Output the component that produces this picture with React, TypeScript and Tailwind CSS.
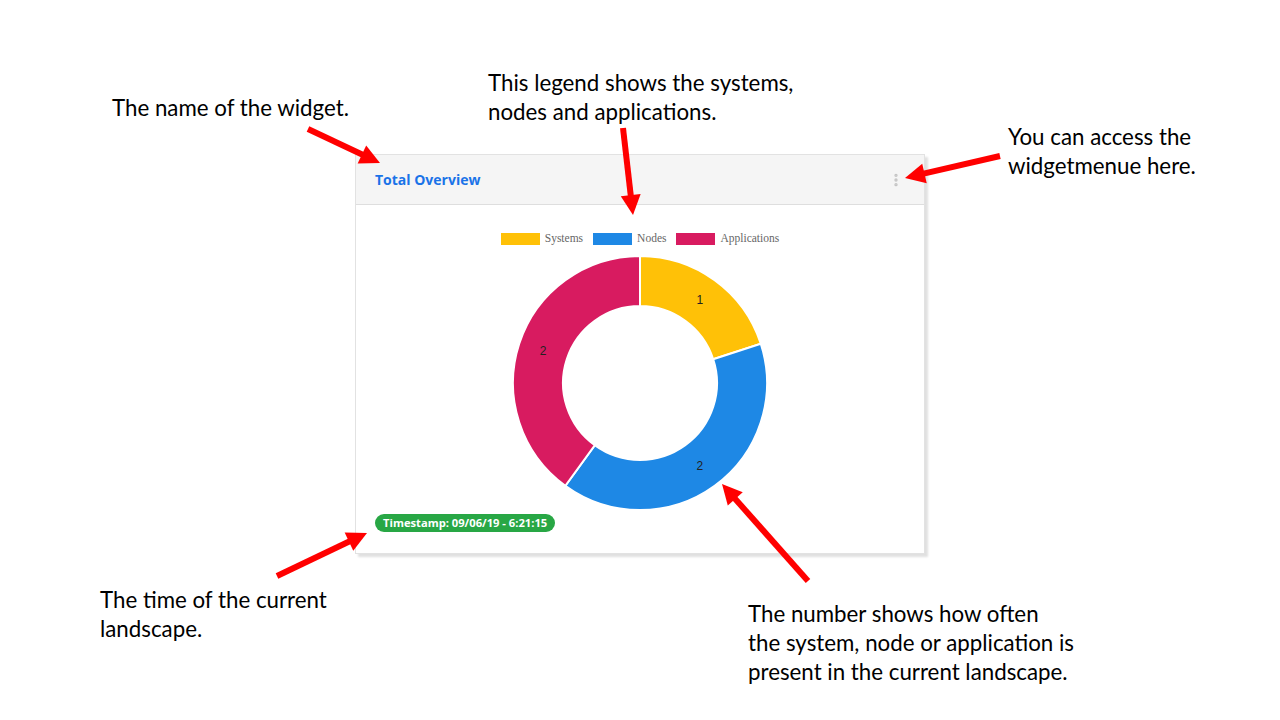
import { MoreVertical } from 'lucide-react'

interface Slice {
  label: string
  value: number
  color: string
}

const slices: Slice[] = [
  { label: 'Systems', value: 1, color: '#ffc107' },
  { label: 'Nodes', value: 2, color: '#1e88e5' },
  { label: 'Applications', value: 2, color: '#d81b60' },
]

// point on circle, angle measured clockwise from 12 o'clock
const pt = (cx: number, cy: number, r: number, a: number) => [
  cx + r * Math.sin(a),
  cy - r * Math.cos(a),
]

function arcPath(cx: number, cy: number, ro: number, ri: number, a0: number, a1: number) {
  const large = a1 - a0 > Math.PI ? 1 : 0
  const [x0, y0] = pt(cx, cy, ro, a0)
  const [x1, y1] = pt(cx, cy, ro, a1)
  const [x2, y2] = pt(cx, cy, ri, a1)
  const [x3, y3] = pt(cx, cy, ri, a0)
  return `M${x0} ${y0} A${ro} ${ro} 0 ${large} 1 ${x1} ${y1} L${x2} ${y2} A${ri} ${ri} 0 ${large} 0 ${x3} ${y3} Z`
}

function Donut() {
  const cx = 130
  const cy = 130
  const ro = 127
  const ri = 77
  const total = slices.reduce((s, x) => s + x.value, 0)
  let a = 0
  return (
    <svg width={260} height={260} viewBox="0 0 260 260">
      {slices.map((s) => {
        const a0 = a
        const a1 = a + (s.value / total) * Math.PI * 2
        a = a1
        const mid = (a0 + a1) / 2
        const [lx, ly] = pt(cx, cy, (ro + ri) / 2, mid)
        return (
          <g key={s.label}>
            <path d={arcPath(cx, cy, ro, ri, a0, a1)} fill={s.color} stroke="#fff" strokeWidth={2} />
            <text
              x={lx}
              y={ly}
              textAnchor="middle"
              dominantBaseline="central"
              fontSize={12}
              fill="#222"
              fontFamily="'Liberation Sans', Arial, sans-serif"
            >
              {s.value}
            </text>
          </g>
        )
      })}
    </svg>
  )
}

function Arrow({ x1, y1, x2, y2 }: { x1: number; y1: number; x2: number; y2: number }) {
  const dx = x2 - x1
  const dy = y2 - y1
  const len = Math.hypot(dx, dy)
  const ux = dx / len
  const uy = dy / len
  const head = 20
  const half = 10
  const bx = x2 - ux * head
  const by = y2 - uy * head
  return (
    <g>
      <line x1={x1} y1={y1} x2={bx + ux * 2} y2={by + uy * 2} stroke="#ff0000" strokeWidth={6} />
      <polygon
        points={`${x2},${y2} ${bx - uy * half},${by + ux * half} ${bx + uy * half},${by - ux * half}`}
        fill="#ff0000"
      />
    </g>
  )
}

export default function App() {
  return (
    <div
      className="relative w-[1280px] h-[720px] bg-white overflow-hidden text-black"
      style={{ fontFamily: "Lato, 'Open Sans', sans-serif" }}
    >
      {/* Widget card */}
      <div className="ml-[355px] mt-[154px] w-[570px] h-[400px] bg-white border border-[#e2e2e2] shadow-[3px_3px_2px_rgba(0,0,0,0.12)] flex flex-col">
        <div className="h-[50px] bg-[#f5f5f5] border-b border-[#dedede] flex items-center justify-between pl-[19px] pr-[20px]">
          <span className="text-[14px] font-bold text-[#1a73e8] font-['Open_Sans',sans-serif]">Total Overview</span>
          <MoreVertical className="w-4 h-4 text-[#c4c4c4]" strokeWidth={3} />
        </div>
        <div className="flex-1 flex flex-col items-center pt-[28px] relative">
          <div className="flex items-center gap-[10px] font-['Liberation_Serif',serif] text-[11.5px] text-[#666] leading-none">
            {slices.map((s) => (
              <div key={s.label} className="flex items-center gap-[5px]">
                <span className="w-[39px] h-[12px] inline-block" style={{ backgroundColor: s.color }} />
                <span>{s.label}</span>
              </div>
            ))}
          </div>
          <div className="mt-[8px]">
            <Donut />
          </div>
          <div className="absolute left-[19px] bottom-[21px] bg-[#28a745] text-white rounded-full px-[8px] h-[18px] flex items-center text-[11.2px] font-bold font-['Open_Sans',sans-serif]">
            Timestamp: 09/06/19 - 6:21:15
          </div>
        </div>
      </div>

      {/* Annotations */}
      <div className="absolute left-[112px] top-[93px] text-[22.3px] leading-[29px]">The name of the widget.</div>
      <div className="absolute left-[488px] top-[68px] text-[22.3px] leading-[29px]">
        This legend shows the systems,
        <br />
        nodes and applications.
      </div>
      <div className="absolute left-[1008px] top-[122px] text-[22.3px] leading-[29px]">
        You can access the
        <br />
        widgetmenue here.
      </div>
      <div className="absolute left-[100px] top-[585px] text-[22.3px] leading-[29px]">
        The time of the current
        <br />
        landscape.
      </div>
      <div className="absolute left-[748px] top-[599px] text-[22.3px] leading-[29px]">
        The number shows how often
        <br />
        the system, node or application is
        <br />
        present in the current landscape.
      </div>

      <svg className="absolute inset-0 pointer-events-none" width={1280} height={720}>
        <Arrow x1={308} y1={129} x2={380} y2={163} />
        <Arrow x1={623} y1={128} x2={633} y2={215} />
        <Arrow x1={1000} y1={156} x2={905} y2={178} />
        <Arrow x1={808} y1={581} x2={722} y2={484} />
        <Arrow x1={277} y1={576} x2={367} y2={533} />
      </svg>
    </div>
  )
}
